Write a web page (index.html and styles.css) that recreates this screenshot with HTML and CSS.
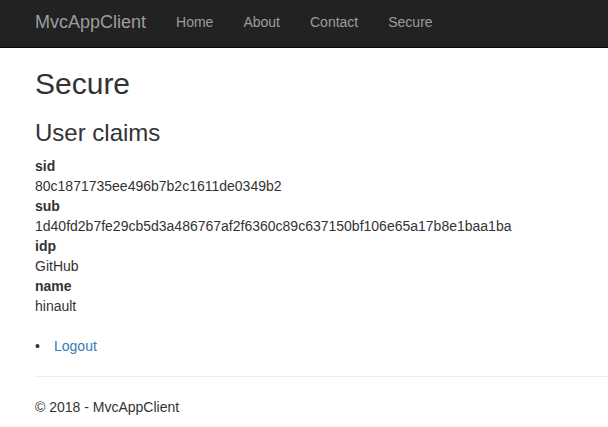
FILE: index.html
```html
<!DOCTYPE html>
<html>
<head>
<meta charset="utf-8">
<title>Secure - MvcAppClient</title>
<link rel="stylesheet" href="styles.css">
</head>
<body>
<header class="navbar">
  <div class="navbar-inner">
    <a class="brand" href="#">MvcAppClient</a>
    <nav class="nav">
      <a class="nav-link" href="#">Home</a>
      <a class="nav-link" href="#">About</a>
      <a class="nav-link" href="#">Contact</a>
      <a class="nav-link" href="#">Secure</a>
    </nav>
  </div>
</header>
<main class="body-content">
  <h2 class="title">Secure</h2>
  <h3 class="subtitle">User claims</h3>
  <dl class="claims">
    <dt>sid</dt>
    <dd>80c1871735ee496b7b2c1611de0349b2</dd>
    <dt>sub</dt>
    <dd>1d40fd2b7fe29cb5d3a486767af2f6360c89c637150bf106e65a17b8e1baa1ba</dd>
    <dt>idp</dt>
    <dd>GitHub</dd>
    <dt>name</dt>
    <dd>hinault</dd>
  </dl>
  <ul class="actions">
    <li class="action-item"><a class="link" href="#">Logout</a></li>
  </ul>
  <hr class="rule">
  <footer class="footer">
    <p class="footer-text">&copy; 2018 - MvcAppClient</p>
  </footer>
</main>
</body>
</html>
```

FILE: styles.css
```css
* { box-sizing: border-box; }
html, body { margin: 0; padding: 0; }
body {
  font-family: "Liberation Sans", Arial, Helvetica, sans-serif;
  font-size: 14px;
  line-height: 20px;
  color: #333;
  background: #fff;
}
.navbar {
  height: 48px;
  background: #222;
  border-bottom: 1px solid #080808;
}
.navbar-inner {
  display: flex;
  align-items: flex-start;
  padding: 0 0 0 20px;
}
.brand {
  display: block;
  padding: 12px 15px;
  font-size: 18px;
  line-height: 20px;
  color: #9d9d9d;
  text-decoration: none;
}
.nav { display: flex; }
.nav-link {
  display: block;
  padding: 12px 15px;
  line-height: 20px;
  font-size: 14px;
  color: #9d9d9d;
  text-decoration: none;
}
.body-content {
  padding: 0 0 0 35px;
}
.title {
  margin: 19px 0 10px;
  font-size: 30px;
  font-weight: 500;
  line-height: 1.1;
}
.subtitle {
  margin: 20px 0 10px;
  font-size: 24px;
  font-weight: 500;
  line-height: 1.1;
}
.claims {
  margin: 0 0 20px;
}
.claims dt { font-weight: bold; }
.claims dd { margin: 0; }
.actions {
  margin: 0 0 10px;
  padding: 0;
  list-style: none;
}
.action-item { display: flex; }
.action-item::before {
  content: "\2022";
  width: 19px;
  flex: none;
  color: #333;
}
.link { color: #337ab7; text-decoration: none; }
.rule {
  margin: 20px 0;
  border: 0;
  border-top: 1px solid #eee;
}
.footer-text { margin: 0 0 10px; }
```
